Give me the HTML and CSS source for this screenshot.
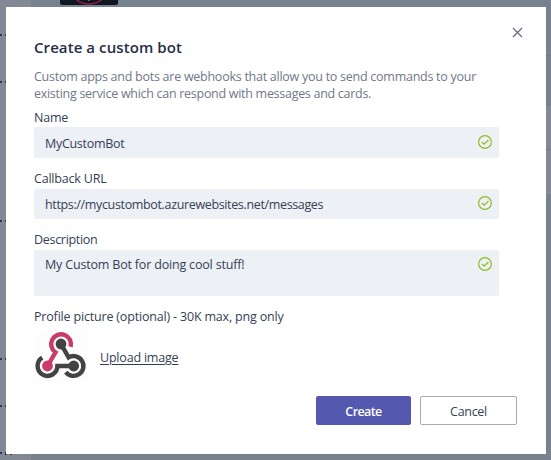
FILE: index.html
```html
<!DOCTYPE html>
<html lang="en">
<head>
<meta charset="utf-8">
<title>Create a custom bot</title>
<link rel="stylesheet" href="styles.css">
</head>
<body>
<svg class="backdrop" width="551" height="460" aria-hidden="true">
  <rect width="31" height="460" fill="#828994"/>
  <rect x="545" y="55" width="6" height="1" fill="#6e7b8e"/>
  <rect x="545" y="106" width="6" height="88" fill="#828994"/>
  <rect x="545" y="149" width="6" height="1" fill="#737b88"/>
  <rect x="60" y="-10" width="58" height="15" rx="2" fill="#101522"/>
  <circle cx="89" cy="-16" r="20" fill="none" stroke="#8d2147" stroke-width="1.5"/>
  <path d="M89 0v1" stroke="#a9aeb8"/>
  <g fill="#303b51">
    <path d="M0 34h2v2H0zM5 34h2v2H5zM0 81h2v2H0zM5 81h2v2H5zM0 220h2v2H0zM5 220h2v2H5zM0 358h2v2H0zM5 358h2v2H5zM0 405h2v2H0zM5 405h2v2H5zM0 452h2v2H0zM5 452h2v3H5zM10 454h2v1h-2z"/>
  </g>
</svg>
<main class="dialog">
  <button class="close" aria-label="Close"><svg width="11" height="11"><path d="M1 1l9 9M10 1l-9 9"/></svg></button>
  <h1 class="title"><span>Create a custom bot</span></h1>
  <p class="intro"><span class="line intro-a">Custom apps and bots are webhooks that allow you to send commands to your</span><span class="line intro-b">existing service which can respond with messages and cards.</span></p>
  <div class="label name-label">Name</div>
  <div class="field name-field"><span>MyCustomBot</span><svg class="check" width="14" height="14"><circle cx="7" cy="7" r="6.4"/><path d="M4 7l2.1 2.2L10.5 5"/></svg></div>
  <div class="label url-label">Callback URL</div>
  <div class="field url-field"><span>https://mycustombot.azurewebsites.net/messages</span><svg class="check" width="14" height="14"><circle cx="7" cy="7" r="6.4"/><path d="M4 7l2.1 2.2L10.5 5"/></svg></div>
  <div class="label description-label">Description</div>
  <div class="field area"><span>My Custom Bot for doing cool stuff!</span><svg class="check" width="14" height="14"><circle cx="7" cy="7" r="6.4"/><path d="M4 7l2.1 2.2L10.5 5"/></svg></div>
  <div class="label picture-label">Profile picture (optional) - 30K max, png only</div>
  <div class="upload">
    <svg class="logo" width="54" height="51" viewBox="0 0 54 51">
      <rect width="53" height="51" fill="#fdfdfd"/>
      <g fill="none" stroke-width="4.4">
        <path stroke="#434343" d="M8.2 27.6A9.9 9.9 0 1 0 23.4 36H39.5"/>
        <path stroke="#434343" d="M31.8 42.2A9.9 9.9 0 1 0 34.6 27.4L27 14"/>
        <path stroke="#ca3b67" d="M36.6 16.8A9.9 9.9 0 1 0 21.5 22.3L13.5 36"/>
      </g>
      <circle cx="27" cy="14" r="5.4" fill="#434343"/><circle cx="39.7" cy="36" r="5.4" fill="#434343"/><circle cx="13.5" cy="36" r="5.4" fill="#ca3b67"/>
    </svg>
    <a class="upload-link">Upload image</a>
  </div>
  <div class="actions"><button class="button primary"><span>Create</span></button><button class="button secondary"><span>Cancel</span></button></div>
</main>
</body>
</html>
```
FILE: styles.css
```css
* { box-sizing: border-box; }
body { margin: 0; width: 551px; height: 460px; overflow: hidden; padding: 7px 0 0 6px; background: #78828e; font: 12.5px/17px "Open Sans", "Noto Sans", sans-serif; letter-spacing: -0.2px; color: #343f56; }
.backdrop { position: absolute; inset: 0; z-index: -1; }
.dialog { position: relative; width: 540px; height: 447px; padding: 29px 28px 0; background: #fff; }
.close { position: absolute; left: 506px; top: 20px; width: 11px; height: 11px; padding: 0; border: 0; background: none; }
.close svg { display: block; fill: none; stroke: #606b7d; stroke-width: 1.2; }
.title { margin: 0; font-size: 15px; line-height: 22px; font-weight: 600; color: #252d48; letter-spacing: 0.08px; }
.intro { margin: 10px 0 0; height: 34px; color: #707889; letter-spacing: -0.26px; }
.line { display: block; width: max-content; white-space: nowrap; }
.intro-b { letter-spacing: -0.285px; }
.label { height: 17px; white-space: nowrap; }
.name-label { margin-top: 7px; }
.url-label { margin-top: 12px; }
.description-label { margin-top: 12px; letter-spacing: -0.3px; }
.picture-label { margin-top: 12px; letter-spacing: -0.18px; }
.field { display: flex; justify-content: space-between; width: 465px; height: 31px; padding: 8px 7px 0 11px; background: #edf0f5; border-radius: 2px; color: #343f56; }
.name-field { margin-top: 1px; letter-spacing: -0.3px; }
.url-field { height: 30px; margin-top: 2px; padding-top: 7px; letter-spacing: -0.35px; }
.area { height: 46px; margin-top: 2px; padding-top: 7px; letter-spacing: -0.18px; }
.check { display: block; fill: none; stroke: #8abd23; stroke-width: 1.15; }
.upload { display: flex; height: 51px; margin-top: 5px; }
.upload-link { height: 17px; margin: 19px 0 0 12px; text-decoration: underline; text-underline-offset: 2px; }
.actions { display: flex; gap: 9px; margin: 15px 0 0 282px; }
.button { width: 95px; height: 29px; padding: 2px 0 0; border: 0; border-radius: 2px; font: inherit; letter-spacing: -0.3px; }
.primary { background: #5558af; color: #fff; font-weight: 600; letter-spacing: -0.6px; }
.secondary { width: 97px; background: #fff; border: 1px solid #a6abba; color: #343f56; }
.area span { margin-top: -1px; }
```
